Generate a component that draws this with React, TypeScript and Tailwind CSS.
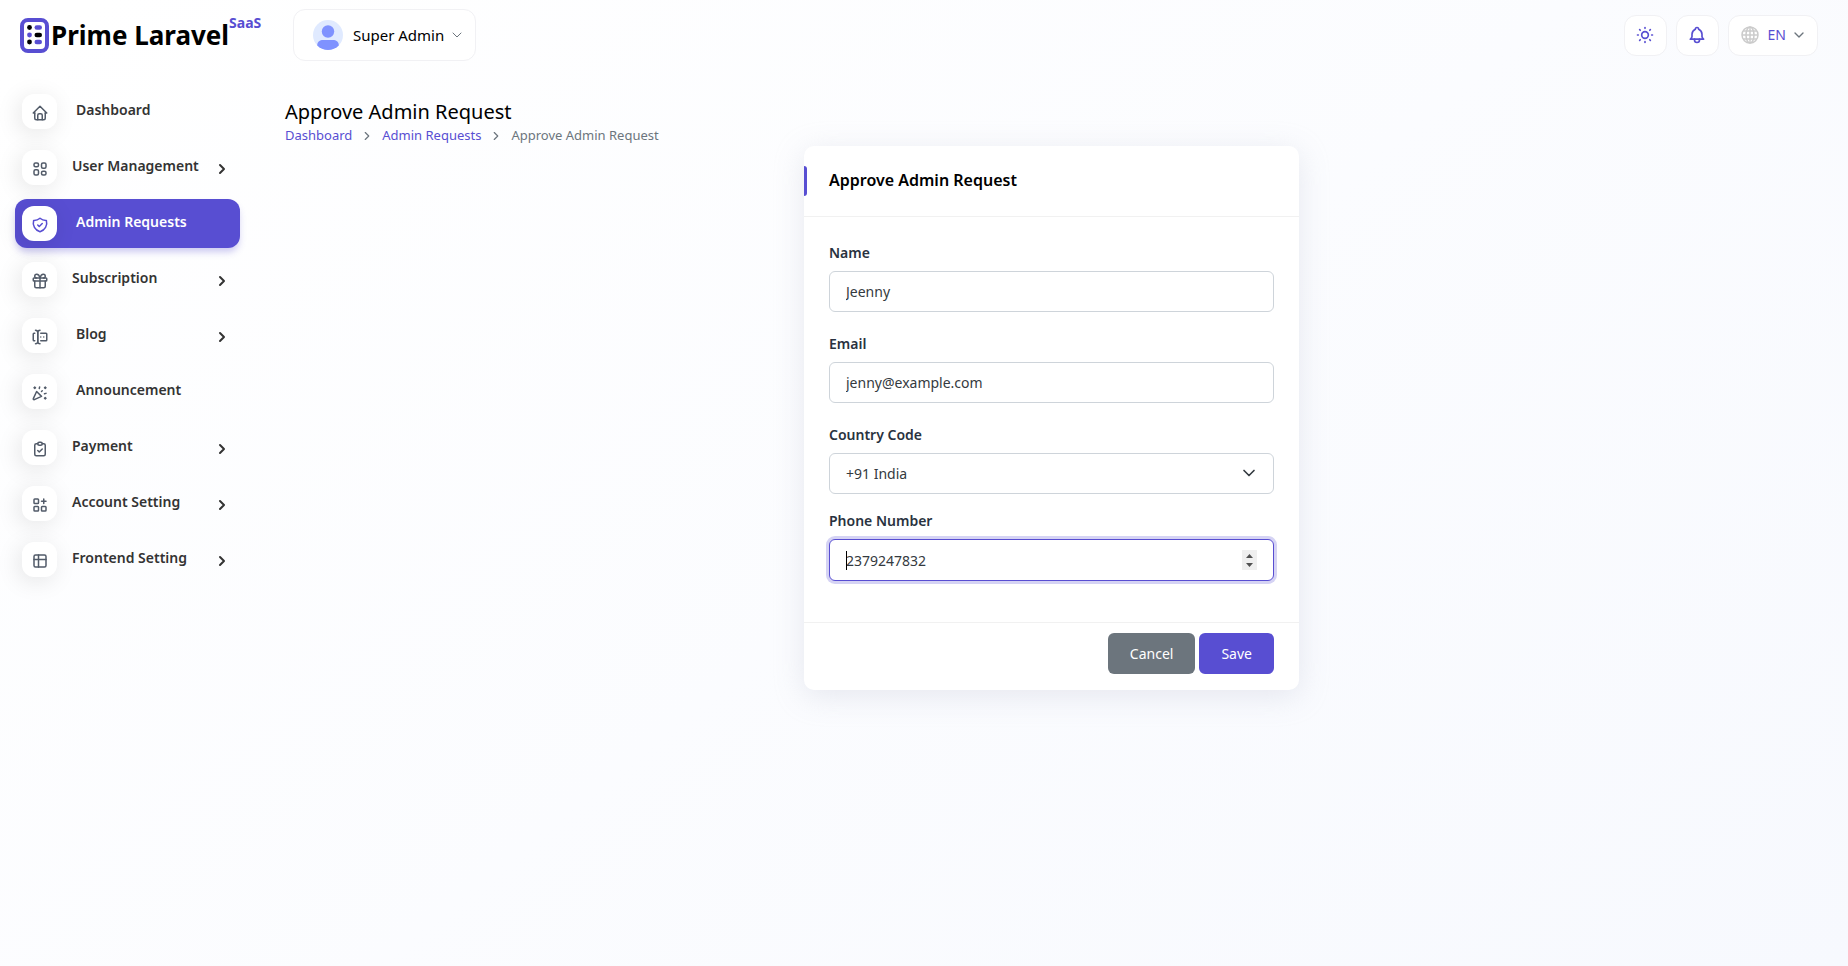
import type { ReactNode } from 'react';
import type { IconType } from 'react-icons';
import clsx from 'clsx';
import {
  TbApps,
  TbBell,
  TbClipboardCheck,
  TbConfetti,
  TbForms,
  TbGift,
  TbHome,
  TbLayout2,
  TbSun,
} from 'react-icons/tb';
import { ChevronDown, ChevronRight } from 'lucide-react';

interface NavItem {
  label: string;
  icon: IconType;
  hasSubmenu?: boolean;
  indent?: boolean;
  active?: boolean;
}

function StrokeIcon({ size, children }: { size?: string | number; children: ReactNode }) {
  return (
    <svg
      width={size}
      height={size}
      viewBox="0 0 24 24"
      fill="none"
      stroke="currentColor"
      strokeWidth="2"
      strokeLinecap="round"
      strokeLinejoin="round"
    >
      {children}
    </svg>
  );
}

const ShieldIcon: IconType = ({ size }) => (
  <StrokeIcon size={size}>
    <path d="M9 12l2 2l4 -4" />
    <path d="M12 3a12 12 0 0 0 8.500 3a12 12 0 0 1 -8.500 15a12 12 0 0 1 -8.500 -15a12 12 0 0 0 8.500 -3" />
  </StrokeIcon>
);

const TableIcon: IconType = ({ size }) => (
  <StrokeIcon size={size}>
    <rect x="4" y="4" width="16" height="16" rx="2" />
    <path d="M4 10h16M10 4v16" />
  </StrokeIcon>
);

const navItems: NavItem[] = [
  { label: 'Dashboard', icon: TbHome, indent: true },
  { label: 'User Management', icon: TbLayout2, hasSubmenu: true },
  { label: 'Admin Requests', icon: ShieldIcon, indent: true, active: true },
  { label: 'Subscription', icon: TbGift, hasSubmenu: true },
  { label: 'Blog', icon: TbForms, hasSubmenu: true, indent: true },
  { label: 'Announcement', icon: TbConfetti, indent: true },
  { label: 'Payment', icon: TbClipboardCheck, hasSubmenu: true },
  { label: 'Account Setting', icon: TbApps, hasSubmenu: true },
  { label: 'Frontend Setting', icon: TableIcon, hasSubmenu: true },
];

const inputClass =
  'h-[41px] w-full rounded-md border border-[#ced4da] bg-white px-4 text-sm text-[#343a40] outline-none';

function Logo() {
  return (
    <a href="#" className="flex items-center text-black">
      <svg width="29" height="35" viewBox="0 0 29 35" fill="none" className="shrink-0">
        <rect x="2" y="2" width="25" height="31" rx="6" fill="#fff" stroke="#584ed2" strokeWidth="4" />
        <circle cx="9.5" cy="9.5" r="2.4" fill="#000" />
        <rect x="14.5" y="7.2" width="7.5" height="4.6" rx="2.3" fill="#584ed2" />
        <circle cx="9.5" cy="17" r="2.4" fill="#584ed2" />
        <rect x="14.5" y="14.7" width="7.5" height="4.6" rx="2.3" fill="#000" />
        <circle cx="9.5" cy="24" r="2.4" fill="#000" />
        <rect x="14.5" y="21.7" width="7.5" height="4.6" rx="2.3" fill="#584ed2" />
      </svg>
      <span className="flex items-start pl-0.5">
        <span className="text-[26px] leading-9 font-bold">Prime Laravel</span>
        <span className="text-sm leading-3 font-bold text-[#584ed2]">SaaS</span>
      </span>
    </a>
  );
}

function Avatar() {
  return (
    <svg width="30" height="30" viewBox="0 0 30 30">
      <circle cx="15" cy="15" r="15" fill="#e0eaff" />
      <circle cx="15" cy="11.5" r="6.2" fill="#7f92ff" />
      <path d="M4.200 25.400C4.200 21.600 7 20 10 20h10c3 0 5.800 1.600 5.800 5.400A15 15 0 0 1 4.200 25.400z" fill="#7f92ff" />
    </svg>
  );
}

function Globe() {
  return (
    <svg width="18" height="18" viewBox="0 0 18 18" fill="none" stroke="#cbcbcb" strokeWidth="1.5">
      <circle cx="9" cy="9" r="8" />
      <ellipse cx="9" cy="9" rx="4" ry="8" />
      <path d="M9 1v16M1 9h16M2.200 5h13.600M2.200 13h13.600" />
    </svg>
  );
}

function HeaderButton({ children, label }: { children: ReactNode; label: string }) {
  return (
    <button
      type="button"
      aria-label={label}
      className="flex h-[41px] min-w-[43px] items-center justify-center rounded-xl border border-[#f1f1f4] bg-white text-[#584ed2]"
    >
      {children}
    </button>
  );
}

function Header() {
  return (
    <header className="flex h-[70px] items-center pr-[30px]">
      <div className="w-[293px] shrink-0 pl-5">
        <Logo />
      </div>
      <button
        type="button"
        className="flex h-[52px] items-center gap-[10px] rounded-xl border border-[#f1f1f4] bg-white pr-[10px] pl-[19px] text-[15px] text-black"
      >
        <Avatar />
        <span className="flex items-center gap-[5px]">
          Super Admin
          <ChevronDown size={16} strokeWidth={1.5} className="text-[#6c757d]" />
        </span>
      </button>
      <div className="ml-auto flex items-center gap-[9px]">
        <HeaderButton label="Theme">
          <TbSun size={20} />
        </HeaderButton>
        <HeaderButton label="Notifications">
          <TbBell size={20} />
        </HeaderButton>
        <HeaderButton label="Language">
          <span className="flex items-center gap-[9px] pr-[10px] pl-3 text-sm">
            <Globe />
            <span className="flex items-center gap-[5px]">
              EN
              <ChevronDown size={16} className="text-[#6c757d]" />
            </span>
          </span>
        </HeaderButton>
      </div>
    </header>
  );
}

function Sidebar() {
  return (
    <nav className="w-[255px] shrink-0 px-[15px] pt-[17px]">
      <ul className="flex flex-col gap-[7px]">
        {navItems.map(({ label, icon: Icon, hasSubmenu, indent, active }) => (
          <li key={label}>
            <a
              href="#"
              className={clsx(
                'flex h-[49px] items-center rounded-xl pr-[10px] pl-[7px] text-sm font-semibold',
                active
                  ? 'bg-[#584ed2] text-white shadow-[0_5px_7px_-1px_rgba(88,78,210,0.3)]'
                  : 'text-[#333333]'
              )}
            >
              <span
                className={clsx(
                  'flex size-[35px] items-center justify-center rounded-xl bg-white pt-[3px] shadow-[-3px_4px_23px_rgba(0,0,0,0.1)]',
                  active ? 'text-[#584ed2]' : 'text-[#525b69]'
                )}
              >
                <Icon size={18} />
              </span>
              <span className={clsx('pb-[3px]', indent ? 'pl-[19px]' : 'pl-[15px]')}>{label}</span>
              {hasSubmenu && (
                <span className="ml-auto pt-0.5">
                  <ChevronRight size={16} strokeWidth={3} />
                </span>
              )}
            </a>
          </li>
        ))}
      </ul>
    </nav>
  );
}

function Breadcrumb() {
  return (
    <div>
      <h4 className="text-xl leading-[26px] text-black">Approve Admin Request</h4>
      <nav aria-label="Breadcrumb">
        <ol className="flex items-center gap-2 text-[13px] leading-[21px] text-[#6c757d]">
          <li>
            <a href="#" className="text-[#584ed2]">Dashboard</a>
          </li>
          <ChevronRight size={14} />
          <li>
            <a href="#" className="text-[#584ed2]">Admin Requests</a>
          </li>
          <ChevronRight size={14} />
          <li>Approve Admin Request</li>
        </ol>
      </nav>
    </div>
  );
}

interface FieldProps {
  id: string;
  label: string;
  className?: string;
  children: ReactNode;
}

function Field({ id, label, className, children }: FieldProps) {
  return (
    <div className={className}>
      <label htmlFor={id} className="mb-2 block text-sm leading-[21px] font-semibold text-[#293240]">
        {label}
      </label>
      {children}
    </div>
  );
}

function ApproveForm() {
  return (
    <form className="col-start-2 rounded-[10px] bg-white shadow-[0_6px_30px_rgba(182,186,203,0.3)]">
      <div className="flex h-[71px] items-center border-b border-[#f1f1f1]">
        <span className="h-[30px] w-[3px] rounded-r-[3px] bg-[#584ed2]" />
        <h5 className="pb-0.5 pl-[22px] text-base font-semibold text-black">Approve Admin Request</h5>
      </div>

      <div className="p-[25px]">
        <Field id="name" label="Name" className="mb-[21px]">
          <input id="name" type="text" defaultValue="Jeenny" className={inputClass} />
        </Field>
        <Field id="email" label="Email" className="mb-[21px]">
          <input id="email" type="email" defaultValue="jenny@example.com" className={inputClass} />
        </Field>
        <Field id="country" label="Country Code" className="mb-4">
          <div className="relative">
            <select id="country" className={clsx(inputClass, 'appearance-none')}>
              <option>+91 India</option>
            </select>
            <ChevronDown size={20} className="pointer-events-none absolute top-[10px] right-[15px] text-[#343a40]" />
          </div>
        </Field>
        <Field id="phone" label="Phone Number" className="mb-4">
          <div className="relative">
            <input
              id="phone"
              type="number"
              defaultValue="2379247832"
              className="h-[42px] w-full rounded-md border border-[#584ed2] bg-white px-4 text-sm text-[#343a40] caret-transparent shadow-[0_0_0_3px_rgba(88,78,210,0.25)] outline-none [&::-webkit-inner-spin-button]:opacity-0"
            />
            {/* caret and stepper */}
            <span className="pointer-events-none absolute top-3 left-[17px] h-[19px] w-px bg-black" />
            <svg
              width="15"
              height="20"
              viewBox="0 0 15 20"
              className="pointer-events-none absolute top-[11px] right-[17px]"
            >
              <rect width="15" height="20" fill="#efefef" />
              <path d="M4 8l3.500 -4l3.500 4zM4 13l3.500 4l3.500 -4z" fill="#505050" />
            </svg>
          </div>
        </Field>
      </div>

      <div className="flex justify-end gap-1 border-t border-[#f1f1f1] px-[25px] pt-[10px] pb-4">
        <button type="button" className="h-[41px] rounded-md bg-[#6c757d] px-[22px] text-sm text-white">
          Cancel
        </button>
        <button type="submit" className="h-[41px] rounded-md bg-[#584ed2] px-[22px] text-sm text-white">
          Save
        </button>
      </div>
    </form>
  );
}

export default function App() {
  return (
    <div className="min-h-screen bg-linear-[141deg,#ffffff_3%,#f7f9fe_100%] font-['Noto_Sans',sans-serif]">
      <Header />
      <div className="flex">
        <Sidebar />
        <main className="grow px-[30px] pt-[29px]">
          <Breadcrumb />
          <div className="grid grid-cols-3 gap-6">
            <ApproveForm />
          </div>
        </main>
      </div>
    </div>
  );
}
